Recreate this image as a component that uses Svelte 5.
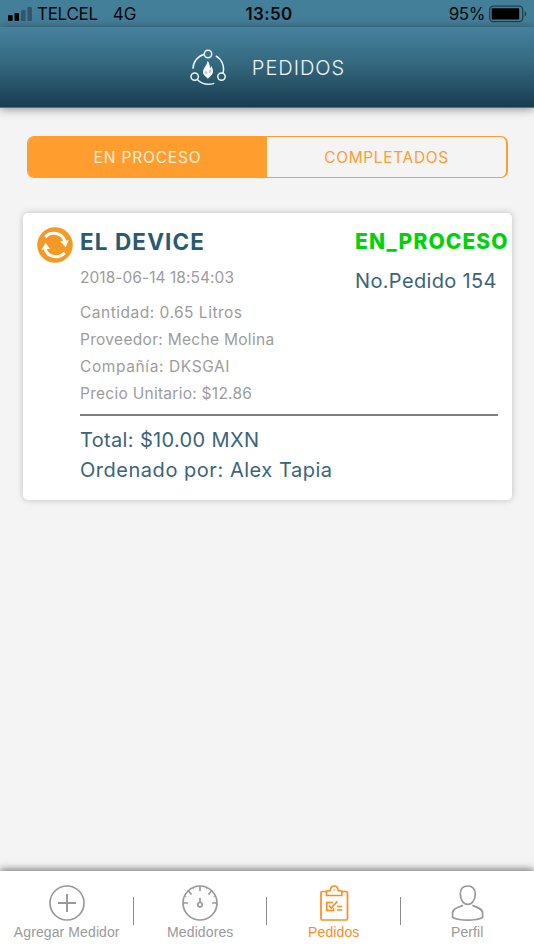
<script>
  const segments = [
    { id: "process", label: "EN PROCESO" },
    { id: "completed", label: "COMPLETADOS" },
  ];

  const tabs = [
    { id: "add", label: "Agregar Medidor" },
    { id: "meters", label: "Medidores" },
    { id: "orders", label: "Pedidos" },
    { id: "profile", label: "Perfil" },
  ];

  const order = {
    device: "EL DEVICE",
    date: "2018-06-14 18:54:03",
    status: "EN_PROCESO",
    number: 154,
    details: [
      { label: "Cantidad", value: "0.65 Litros", type: "amount" },
      { label: "Proveedor", value: "Meche Molina", type: "provider" },
      { label: "Compañía", value: "DKSGAI", type: "company" },
      { label: "Precio Unitario", value: "$12.86", type: "price" },
    ],
    total: "$10.00 MXN",
    user: "Alex Tapia",
  };

  let segment = "process";
  let tab = "orders";
</script>

<div class="app">
  <div class="status-bar">
    <div class="carrier">
      <svg width="24" height="14" viewBox="0 0 24 14">
        <rect x="0" y="8" width="4.6" height="6" rx="1" />
        <rect x="6.5" y="6" width="4.6" height="8" rx="1" />
        <rect x="13" y="3" width="4.6" height="11" rx="1" opacity="0.3" />
        <rect x="19.4" y="0" width="4.6" height="14" rx="1" opacity="0.3" />
      </svg>
      <span class="operator">TELCEL</span>
      <span class="network">4G</span>
    </div>
    <span class="clock">13:50</span>
    <div class="battery">
      <span>95%</span>
      <svg width="38" height="18" viewBox="0 0 38 18">
        <rect x="0.7" y="1.2" width="33" height="15.4" rx="3.5" fill="none" stroke="#000" stroke-opacity="0.5" stroke-width="1.3" />
        <rect x="2.7" y="3.3" width="27.5" height="11.2" rx="0.8" />
        <path d="M35.6 6.3q1.8 .8 1.8 2.7t-1.8 2.7z" opacity="0.5" />
      </svg>
    </div>
  </div>

  <header class="header">
    <svg class="logo" width="38" height="38" viewBox="0 0 38 38" fill="none" stroke="#eef5f8" stroke-width="1.5">
      <circle cx="19" cy="5" r="3.7" />
      <circle cx="5.7" cy="27.6" r="3.7" />
      <circle cx="32.5" cy="27.6" r="3.7" />
      <path d="M4 19.8A15.3 15.3 0 0 1 15.4 5.2M26.8 6.8A15.3 15.3 0 0 1 34 24.2M8.2 30.5Q15 37.5 25.3 34.4" />
      <path d="M18.5 11.8c.2 4-4.8 7.5-4.5 11.7.3 3 2.7 3.6 4.8 6.3 2.4-2.4 5.3-4.2 5.2-7.8 0-2.5-1.4-3.7-1.4-5-1 .6-1 1.8-1.5 2.5-.3-3-.9-5.8-2.6-7.7z" fill="#f8fafb" stroke="none" />
      <path d="M15.5 22l2.8.8v2.6l-2.6-1.4zM20 21.3l2.2-1v3l-2.2 1.2z" fill="#bccad1" stroke="none" />
    </svg>
    <h1>PEDIDOS</h1>
  </header>

  <main>
    <div class="segments">
      {#each segments as item}
        <button
          class="segment"
          class:selected={segment === item.id}
          on:click={() => (segment = item.id)}
        >
          {item.label}
        </button>
      {/each}
    </div>

    <article class="card">
      <svg class="sync" width="36" height="36" viewBox="0 0 36 36">
        <circle cx="18" cy="18" r="17.8" fill="#f39a26" />
        <g fill="none" stroke="#fff" stroke-width="3">
          <path d="M8.3 10.2C13 4.6 25 4.4 27.8 14" />
          <path d="M27.7 25.8C23 31.4 11 31.6 8.2 22" />
        </g>
        <path d="M23 14.2l8.6-1-2.8 7zM13 21.8l-8.6 1 4.2-6.8z" fill="#fff" />
      </svg>

      <div class="content">
        <div class="top">
          <div>
            <h2>{order.device}</h2>
            <p class="date">{order.date}</p>
          </div>
          <div class="state">
            <strong>{order.status}</strong>
            <p class="number">No.Pedido {order.number}</p>
          </div>
        </div>

        <ul class="details">
          {#each order.details as detail}
            <li class={detail.type}>{detail.label}: {detail.value}</li>
          {/each}
        </ul>

        <div class="summary">
          <p class="total">Total: {order.total}</p>
          <p class="user">Ordenado por: {order.user}</p>
        </div>
      </div>
    </article>
  </main>

  <nav class="tabs">
    {#each tabs as item}
      <button class="tab" class:active={tab === item.id} on:click={() => (tab = item.id)}>
        <svg width="38" height="38" viewBox="0 0 38 38" fill="none" stroke="currentColor" stroke-width="1.7">
          {#if item.id === "add"}
            <circle cx="19" cy="19" r="17" />
            <path d="M10 19h18M19 10v18" stroke-width="1.9" />
          {:else if item.id === "meters"}
            <circle cx="19" cy="19" r="17" />
            <path d="M19 2v5M2 19h5M31 19h5M7.5 7l3 3.5M30.5 7l-3 3.5M19 14v4.5" />
            <path d="M12 4l.7 1.3M26 4l-.7 1.3M4 12l1.3.7M34 12l-1.3.7" stroke-width="1" />
            <circle cx="19" cy="20.7" r="2.2" />
          {:else if item.id === "orders"}
            <path d="M11.5 7.5H7.2q-1.2 0-1.2 1.2v26q0 1.3 1.2 1.3h24q1.3 0 1.3-1.3v-26q0-1.2-1.3-1.2h-4.5" />
            <path d="M11.5 11.5V7.8q0-1 1-1h2.6q.7-4.8 4.1-4.8t4.1 4.8h2.6q1 0 1 1v3.7z" stroke-width="1.6" />
            <circle cx="19.2" cy="6" r=".8" fill="currentColor" stroke="none" />
            <path d="M18 18.5h-6.2v8h6.7V24M14 21.5l2.2 2.5 6.2-6.6M22 22.5h5.2M22 26h5.2" stroke-width="1.6" />
          {:else}
            <path d="M19.8 2c-4.6 0-7.5 2.9-7.5 8 0 5.4 2.9 10.4 7.5 10.4s7.5-5 7.5-10.4c0-5.1-2.9-8-7.5-8z" />
            <path d="M15 21.2c-4.6 2.7-10.4 2.7-10.4 8.1v4.1c7.6 3.5 22.8 3.5 30 0v-4.1c0-5.4-5.8-5.4-10.2-8.1" />
          {/if}
        </svg>
        <span>{item.label}</span>
      </button>
    {/each}
  </nav>
</div>

<style>
  :global(body) {
    background-color: #f4f4f4;
  }

  .app {
    height: 950px;
    display: flex;
    flex-direction: column;
    overflow: hidden;
    background-color: #f4f4f4;
    font-family: Inter, "Liberation Sans", sans-serif;
  }

  h1,
  h2,
  p,
  ul {
    margin: 0;
    padding: 0;
  }

  button {
    padding: 0;
    border: none;
    border-radius: 0;
    background: none;
    font-family: inherit;
    white-space: nowrap;
  }

  svg {
    display: block;
    flex: none;
  }

  .status-bar {
    height: 27px;
    flex: none;
    display: grid;
    grid-template-columns: 1fr auto 1fr;
    align-items: center;
    padding: 1px 7px 0 8px;
    box-sizing: border-box;
    background-color: #447f9a;
    color: #05090b;
    font-size: 17px;
    line-height: 26px;
  }

  .carrier {
    display: flex;
    align-items: center;
  }

  .operator {
    margin-left: 5px;
    letter-spacing: -0.3px;
  }

  .network {
    margin-left: 15px;
  }

  .clock {
    padding-left: 3px;
    font-weight: 600;
    letter-spacing: 0.3px;
  }

  .battery {
    display: flex;
    align-items: center;
    justify-content: flex-end;
    gap: 4px;
    letter-spacing: -0.4px;
  }

  .header {
    height: 81px;
    flex: none;
    display: flex;
    justify-content: center;
    box-sizing: border-box;
    padding-top: 22px;
    background: linear-gradient(#46819f, #34697f 45%, #1a3c50);
    border-bottom: 1px solid #54707e;
    box-shadow: 0 1px 9px rgba(0, 0, 0, 0.45);
  }

  .header h1 {
    margin-left: 25px;
    color: #f0f5f7;
    font-size: 20px;
    font-weight: 300;
    letter-spacing: 1px;
    line-height: 38px;
  }

  main {
    flex: 1;
    padding: 28px 22px 0 23px;
  }

  .segments {
    display: flex;
    height: 42px;
    margin: 0 4px;
    box-sizing: border-box;
    border: 1px solid #ff9d2e;
    border-right-width: 2px;
    border-radius: 7px;
    overflow: hidden;
  }

  .segment {
    flex: 1;
    color: #ff9d2e;
    font-size: 15.5px;
    font-weight: 400;
    letter-spacing: 0.65px;
  }

  .segment.selected {
    background-color: #ff9d2e;
    color: #fff0dc;
    letter-spacing: 0.85px;
  }

  .card {
    display: flex;
    height: 287px;
    margin-top: 35px;
    padding: 14px 14px 0;
    box-sizing: border-box;
    border-radius: 5px;
    background-color: #fff;
    box-shadow: 0 0 7px rgba(0, 0, 0, 0.22);
    white-space: nowrap;
  }

  .content {
    flex: 1;
    min-width: 0;
    margin-left: 7px;
    color: #3a647a;
  }

  .top {
    display: grid;
    grid-template-columns: 275px 1fr;
    height: 72px;
  }

  h2 {
    font-size: 22.5px;
    font-weight: 700;
    line-height: 30px;
    letter-spacing: 1.1px;
    color: #2a5a70;
  }

  .date {
    margin-top: 10px;
    color: #9c9c9c;
    font-size: 15.5px;
    font-weight: 400;
    line-height: 21px;
    letter-spacing: 0.05px;
  }

  .state strong {
    display: block;
    padding-top: 1px;
    color: #00d20a;
    font-size: 21px;
    font-weight: 800;
    line-height: 28px;
    letter-spacing: 1.1px;
  }

  .number {
    margin-top: 13px;
    font-size: 20px;
    font-weight: 400;
    line-height: 24px;
    letter-spacing: 0.35px;
  }

  .details {
    list-style: none;
    padding-bottom: 7px;
    border-bottom: 2px solid #7f7f7f;
    color: #9c9c9c;
    font-size: 15.5px;
    font-weight: 400;
    line-height: 27px;
    letter-spacing: 0.5px;
  }

  .provider {
    letter-spacing: 0.3px;
  }

  .company {
    letter-spacing: 0.6px;
  }

  .price {
    letter-spacing: 0.27px;
  }

  .summary {
    padding-top: 9px;
    font-size: 20px;
    font-weight: 400;
    line-height: 30px;
    letter-spacing: 0.35px;
  }

  .user {
    letter-spacing: 0.53px;
  }

  .tabs {
    height: 79px;
    flex: none;
    display: grid;
    grid-template-columns: repeat(4, 1fr);
    background-color: #fff;
    box-shadow: 0 -1px 8px rgba(0, 0, 0, 0.6);
  }

  .tab {
    position: relative;
    display: flex;
    flex-direction: column;
    align-items: center;
    padding-top: 13px;
    color: #999;
    font-family: "Liberation Sans", Arial, sans-serif;
    font-size: 14px;
    line-height: 20px;
    letter-spacing: 0.1px;
  }

  .tab.active {
    color: #ff8a1e;
  }

  .tab:not(:last-child)::after {
    content: "";
    position: absolute;
    top: 26px;
    right: 0;
    width: 1px;
    height: 28px;
    background-color: #8c8c8c;
  }
</style>
